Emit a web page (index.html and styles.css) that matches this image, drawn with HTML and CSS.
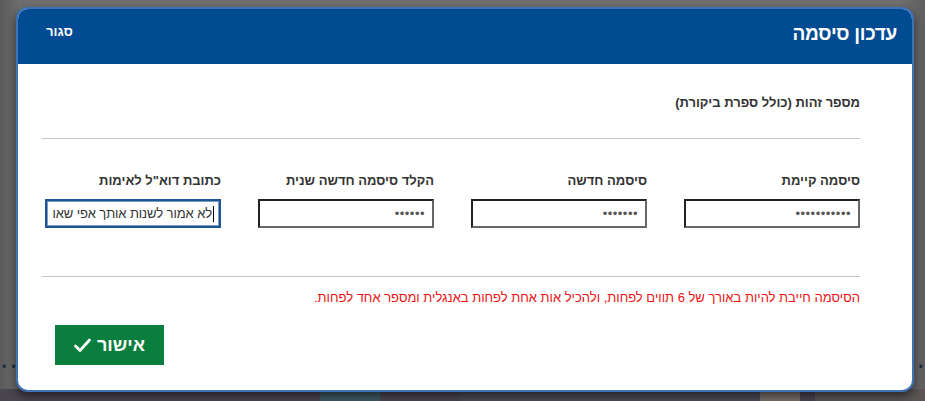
FILE: index.html
```html
<!DOCTYPE html>
<html lang="he" dir="rtl">
<head>
<meta charset="utf-8">
<title>עדכון סיסמה</title>
<link rel="stylesheet" href="styles.css">
</head>
<body>
<div class="backdrop">
  <div class="page-strip">
    <span class="blk b1"></span><span class="blk b2"></span><span class="blk b3"></span><span class="blk b4"></span>
  </div>
  <span class="dots dots-left">• •</span>
  <span class="dots dots-right">•</span>
  <div class="modal">
    <div class="modal-header">
      <h1 class="modal-title">עדכון סיסמה</h1>
      <a class="close-link">סגור</a>
    </div>
    <div class="modal-body">
      <div class="id-label">מספר זהות (כולל ספרת ביקורת)</div>
      <hr class="sep">
      <div class="fields">
        <div class="field">
          <label class="field-label">סיסמה קיימת</label>
          <input class="field-input" type="password" value="12345678901">
        </div>
        <div class="field">
          <label class="field-label">סיסמה חדשה</label>
          <input class="field-input" type="password" value="1234567">
        </div>
        <div class="field">
          <label class="field-label">הקלד סיסמה חדשה שנית</label>
          <input class="field-input" type="password" value="123456">
        </div>
        <div class="field">
          <label class="field-label">כתובת דוא"ל לאימות</label>
          <div class="field-input focused"><span class="caret"></span>לא אמור לשנות אותך אפי שאו</div>
        </div>
      </div>
      <hr class="sep sep2">
      <div class="error">הסיסמה חייבת להיות באורך של 6 תווים לפחות, ולהכיל אות אחת לפחות באנגלית ומספר אחד לפחות.</div>
      <div class="actions">
        <button class="ok-btn">אישור <svg class="check" width="17" height="15" viewBox="0 0 17 15"><path d="M1.5 8 L6 12.5 L15.5 2" fill="none" stroke="#fff" stroke-width="2.8" stroke-linecap="round" stroke-linejoin="round"/></svg></button>
      </div>
    </div>
  </div>
</div>
</body>
</html>
```

FILE: styles.css
```css
html, body {
  margin: 0;
  padding: 0;
}
body {
  font-family: "Liberation Sans", Arial, "DejaVu Sans", sans-serif;
  width: 925px;
  height: 401px;
  overflow: hidden;
}
.backdrop {
  position: relative;
  width: 925px;
  height: 401px;
  background: linear-gradient(to right, #5a5a5a 0px, #6f6f6f 20px, #707070 900px, #5f5f5f 925px);
  padding-top: 7px;
  box-sizing: border-box;
}
.page-strip {
  position: absolute;
  left: 0;
  right: 0;
  bottom: 0;
  height: 12px;
  background: #4a4650;
  display: flex;
}
.blk { display: block; height: 100%; }
.b1 { width: 110px; background: #5b5556; margin-left: 15px; }
.b2 { width: 40px; background: #7a6f68; }
.b3 { width: 300px; background: #4c4b57; }
.b4 { width: 60px; background: #3f5b66; margin-right: 80px; }
.dots {
  position: absolute;
  top: 360px;
  color: #1d2a44;
  font-size: 12px;
  letter-spacing: 1px;
}
.dots-left { left: 2px; }
.dots-right { right: 1px; }
.modal {
  position: relative;
  margin-right: 11px;
  width: 898px;
  height: 385px;
  box-sizing: border-box;
  background: #fff;
  border: 2px solid #3f73b8;
  border-radius: 12px;
  overflow: hidden;
  box-shadow: 0 4px 10px rgba(0,0,0,0.55);
}
.modal-header {
  height: 55px;
  background: #004b91;
  display: flex;
  justify-content: space-between;
  align-items: flex-start;
  padding: 0 15px 0 28px;
}
.modal-title {
  margin: 14px 0 0 0;
  color: #fff;
  font-size: 19px;
  font-weight: bold;
  letter-spacing: -0.3px;
}
.close-link {
  margin-top: 15px;
  color: #fff;
  font-size: 13px;
  font-weight: bold;
}
.modal-body {
  padding: 0 52px 0 20px;
}
.id-label {
  margin-top: 31px;
  font-size: 13px;
  font-weight: bold;
  color: #333;
  height: 16px;
}
.sep {
  margin: 27px 0 0 0;
  width: 818px;
  border: 0;
  border-top: 1px solid #c4c4c4;
  height: 0;
}
.fields {
  display: flex;
  gap: 37px;
  margin-top: 34px;
}
.field {
  width: 176px;
  display: flex;
  flex-direction: column;
}
.field-label {
  font-size: 13px;
  font-weight: bold;
  color: #333;
  height: 16px;
  white-space: nowrap;
}
.field-input {
  margin-top: 10px;
  width: 176px;
  height: 29px;
  box-sizing: border-box;
  border: 2px solid #222;
  border-right-color: #666;
  border-bottom-color: #666;
  background: #fff;
  padding: 0 7px;
  font-family: "Liberation Sans", Arial, sans-serif;
  font-size: 13px;
  color: #555;
  letter-spacing: 0.5px;
  text-align: right;
  outline: none;
}
.field-input.focused {
  border: 2px solid #1c5494;
  box-shadow: inset 0 0 0 1px #7a9cc3;
  display: flex;
  align-items: center;
  color: #333;
  letter-spacing: -0.1px;
  font-size: 13px;
  padding: 0 5px;
  white-space: nowrap;
  overflow: hidden;
}
.caret {
  display: inline-block;
  width: 1px;
  height: 16px;
  background: #000;
  margin-left: 1px;
}
.sep2 {
  margin-top: 48px;
}
.error {
  margin-top: 13px;
  font-size: 13px;
  color: #ee1111;
  height: 16px;
}
.actions {
  display: flex;
  justify-content: flex-end;
  margin-top: 19px;
}
.ok-btn {
  margin-left: 17px;
  width: 109px;
  height: 40px;
  background: #0a7e3c;
  border: 0;
  color: #fff;
  font-family: "Liberation Sans", Arial, sans-serif;
  font-size: 18px;
  font-weight: bold;
  display: flex;
  align-items: center;
  justify-content: center;
  gap: 6px;
  padding: 0;
}
.check { display: block; }
```
